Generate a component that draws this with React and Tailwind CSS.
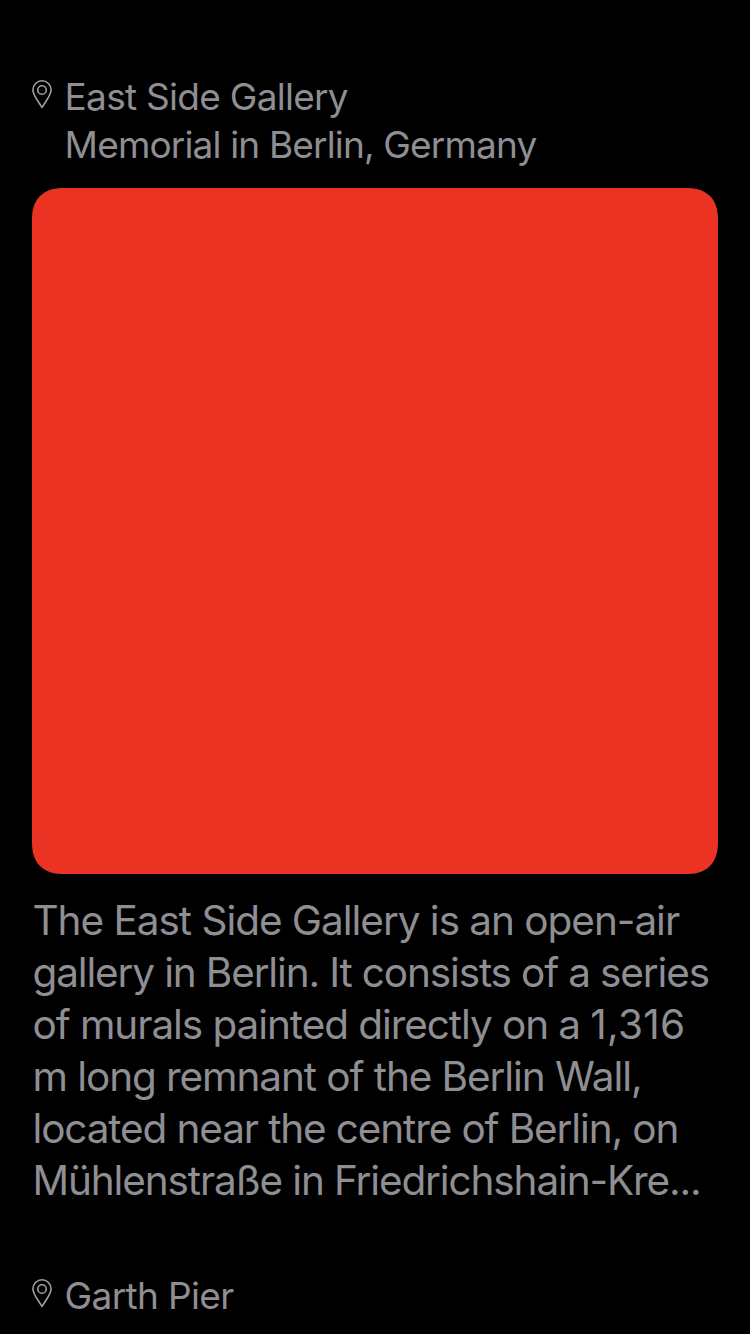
function Pin() {
  return (
    <svg className="mt-[7px] h-[30px] w-[20px] shrink-0" viewBox="0 0 20 30" fill="none" stroke="#a0a0a2" strokeWidth="1.6">
      <path d="M10 27.5 C8 23.5 0.9 15.5 0.9 9.9 A9.1 9.1 0 0 1 19.1 9.9 C19.1 15.5 12 23.5 10 27.5 Z" strokeLinejoin="round" />
      <circle cx="10" cy="10" r="4.3" />
    </svg>
  );
}

const body = [
  ["The East Side Gallery is an open-air", "tracking-[-1.03px]"],
  ["gallery in Berlin. It consists of a series", "tracking-[-1.15px]"],
  ["of murals painted directly on a ", "tracking-[-1.07px]", "1,316"],
  ["m long remnant of the Berlin Wall,", "tracking-[-1.08px]"],
  ["located near the centre of Berlin, on", "tracking-[-1.13px]"],
  ["Mühlenstraße in Friedrichshain-Kre...", "tracking-[-1.13px]"],
];

export default function App() {
  return (
    <main className="flex h-[1334px] w-[750px] flex-col overflow-hidden bg-black px-8 font-['Inter',sans-serif] text-[#8e8e93]">
      <header className="flex h-[188px] shrink-0 gap-[12.6px] pt-[73px]">
        <Pin />
        <div className="text-[37px] leading-[48px] whitespace-nowrap">
          <p className="tracking-[-0.72px]">East Side Gallery</p>
          <p className="tracking-[-0.84px]">Memorial in Berlin, Germany</p>
        </div>
      </header>
      <div className="h-[686px] shrink-0 rounded-[32px] bg-[#eb3323] [corner-shape:superellipse(1.26)]" />
      <div className="mt-[21px] shrink-0 pl-[0.5px] text-[40.5px] leading-[52px] whitespace-nowrap">
        {body.map(([text, tracking, figure]) => (
          <p key={text} className={tracking}>
            {text}
            {figure && <span className="tracking-[0.3px]">{figure}</span>}
          </p>
        ))}
      </div>
      <footer className="mt-[65px] flex shrink-0 gap-[12.6px]">
        <Pin />
        <p className="text-[37px] leading-[48px] tracking-[-0.65px] whitespace-nowrap">Garth Pier</p>
      </footer>
    </main>
  );
}
